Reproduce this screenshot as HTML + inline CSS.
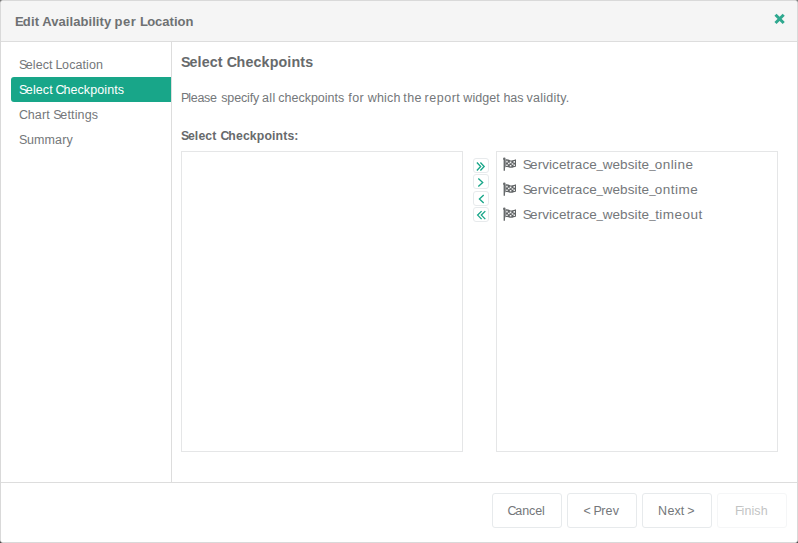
<!DOCTYPE html>
<html lang="en">
<head>
<meta charset="utf-8">
<title>Edit Availability per Location</title>
<style>
  html, body { margin: 0; padding: 0; }
  body {
    width: 798px; height: 543px; overflow: hidden; position: relative;
    background: linear-gradient(#7a7a7a, #4c4c4c);
    font-family: "Liberation Sans", sans-serif;
    font-size: 13px; color: #676a6c;
  }
  .modal {
    position: absolute; left: 0; top: 0; width: 796px; height: 541px;
    border: 1px solid #d9d9d9; border-radius: 3px; background: #fff; overflow: hidden;
  }
  .ln { position: absolute; left: 0; top: 0; width: 796px; height: 16px; line-height: 16px; white-space: nowrap; }
  .ln span { position: absolute; top: 0; }
  .ln i { font-style: normal; }
  .header {
    position: absolute; left: 0; top: 0; width: 796px; height: 40px;
    background: #f5f5f5; border-bottom: 1px solid #ddd;
  }
  .t { font-weight: bold; font-size: 13px; color: #6e7173; }
  .close { position: absolute; left: 771px; top: 10px; width: 14px; height: 14px; }
  .side { position: absolute; left: 0; top: 41px; width: 170px; height: 440px; border-right: 1px solid #ddd; }
  .navbg { position: absolute; left: 10px; top: 76px; width: 160px; height: 25px; background: #18a689; border-radius: 3px 0 0 3px; }
  .n { color: #74777a; }
  .n.w { color: #fff; }
  .h2 { font-weight: bold; font-size: 15px; color: #676a6c; }
  .b { font-weight: bold; color: #676a6c; }
  .box { position: absolute; top: 150px; width: 280px; height: 299px; border: 1px solid #e5e6e7; background: #fff; }
  .mv { position: absolute; left: 472px; width: 14px; height: 13px; border: 1px solid #e7eaec; border-radius: 3px; background: #fff; }
  .mv svg { position: absolute; left: 0; top: 0; }
  .flag { position: absolute; left: 500px; }
  .footer { position: absolute; left: 0; top: 481px; width: 796px; height: 60px; border-top: 1px solid #ddd; background: #fff; }
  .btn {
    position: absolute; top: 492px; width: 68px; height: 33px; border: 1px solid #e7eaec; border-radius: 3px;
    background: #fff;
  }
  .btn.dis { opacity: .4; }
  .g { opacity: .4; }
</style>
</head>
<body>
<div class="modal">
  <div class="header">
    <svg class="close" viewBox="0 0 14 14"><path d="M3.5 3.8 L11.7 12 M11.7 3.8 L3.5 12" stroke="#2fa88f" stroke-width="3" fill="none"/></svg>
  </div>
  <div class="ln t" style="top:13px;font-size:13px"><span style="left:14.08px;letter-spacing:0.15px;"><i style="letter-spacing:-0.93px">E</i>dit</span> <span style="left:41.13px;letter-spacing:0.066px;"><i style="letter-spacing:-0.32px">A</i>vailability</span> <span style="left:113.59px;letter-spacing:0.5px;">per</span> <span style="left:138.98px;letter-spacing:0.012px;"><i style="letter-spacing:-0.77px">L</i>ocation</span></div>

  <div class="side"></div>
  <div class="navbg"></div>
  <div class="ln n" style="top:56px;font-size:12.5px"><span style="left:17.88px;letter-spacing:0.057px;"><i style="letter-spacing:-1.41px">S</i>elect</span> <span style="left:54.52px;letter-spacing:0.091px;"><i style="letter-spacing:-0.37px">L</i>ocation</span></div>
  <div class="ln n w" style="top:81px;font-size:12.5px"><span style="left:17.88px;letter-spacing:0.097px;"><i style="letter-spacing:-1.37px">S</i>elect</span> <span style="left:54.42px;letter-spacing:0.103px;"><i style="letter-spacing:-1.04px">C</i>heckpoints</span></div>
  <div class="ln n" style="top:106px;font-size:12.5px"><span style="left:18.12px;letter-spacing:0.15px;"><i style="letter-spacing:-0.4px">C</i>hart</span> <span style="left:52.28px;letter-spacing:0.146px;"><i style="letter-spacing:-1.32px">S</i>ettings</span></div>
  <div class="ln n" style="top:131px;font-size:12.5px"><span style="left:17.98px;letter-spacing:0.15px;"><i style="letter-spacing:-0.44px">S</i>ummary</span></div>

  <div class="ln h2" style="top:53px;font-size:14.25px"><span style="left:179.94px;letter-spacing:0.15px;"><i style="letter-spacing:-0.92px">S</i>elect</span> <span style="left:225.67px;letter-spacing:0.15px;"><i style="letter-spacing:-0.4px">C</i>heckpoints</span></div>
  <div class="ln n" style="top:89px;font-size:12.5px"><span style="left:180.02px;letter-spacing:-0.278px;"><i style="letter-spacing:-1.14px">P</i>lease</span> <span style="left:220.2px;letter-spacing:-0.122px;">specify</span> <span style="left:261.12px;letter-spacing:0.276px;">all</span> <span style="left:277.22px;letter-spacing:0.007px;">checkpoints</span> <span style="left:347.27px;letter-spacing:0.395px;">for</span> <span style="left:366.67px;letter-spacing:0.206px;">which</span> <span style="left:402.16px;letter-spacing:0.5px;">the</span> <span style="left:423.62px;letter-spacing:0.5px;">report</span> <span style="left:462.37px;letter-spacing:0.047px;">widget</span> <span style="left:502.38px;letter-spacing:-0.069px;">has</span> <span style="left:525.41px;letter-spacing:0.265px;">validity.</span></div>
  <div class="ln b" style="top:127px;font-size:12.25px"><span style="left:180.0px;letter-spacing:0.146px;"><i style="letter-spacing:-1.27px">S</i>elect</span> <span style="left:219.55px;letter-spacing:0.137px;"><i style="letter-spacing:-1.09px">C</i>heckpoints:</span></div>

  <div class="box" style="left:180px"></div>

  <div class="mv" style="top:157px"><svg width="14" height="13" viewBox="0 0 14 13"><path d="M2.9 3.5 L6.65 7.5 L2.9 11.5 M6.4 3.5 L10.15 7.5 L6.4 11.5" stroke="#18a689" stroke-width="1.35" fill="none"/></svg></div>
  <div class="mv" style="top:173.25px"><svg width="14" height="13" viewBox="0 0 14 13"><path d="M4.3 3.5 L8.7 7.5 L4.3 11.5" stroke="#18a689" stroke-width="1.35" fill="none"/></svg></div>
  <div class="mv" style="top:189.5px"><svg width="14" height="13" viewBox="0 0 14 13"><path d="M9.7 3.1 L5.45 7.1 L9.7 11.1" stroke="#18a689" stroke-width="1.35" fill="none"/></svg></div>
  <div class="mv" style="top:205.75px"><svg width="14" height="13" viewBox="0 0 14 13"><path d="M7.6 3.1 L3.65 7.1 L7.6 11.1 M11.3 3.1 L7.35 7.1 L11.3 11.1" stroke="#18a689" stroke-width="1.35" fill="none"/></svg></div>

  <div class="box" style="left:495px"></div>
  <svg class="flag" style="top:155px" width="16" height="16" viewBox="0 0 16 16"><path d="M3.3 2.6 V14.8" stroke="#676a6c" stroke-width="1.4" fill="none"/><circle cx="3.3" cy="2.8" r="1.25" fill="#676a6c"/><path d="M4.3 3.5 C6 2.9 7.5 3.6 9 4.2 C11 4.9 13 3.9 15 3.2 V10.6 C13 11.4 11 12.2 9 11.7 C7.3 11.2 6 10.6 4.3 11.4 Z" fill="#606365"/><path d="M5.2 4.8h1.5v1.6h-1.5z M8.8 5.6h1.6v1.6h-1.6z M12.5 5.1h1.5v1.6h-1.5z M7 6.8h1.6v1.5h-1.6z M10.7 7.3h1.6v1.5h-1.6z M5.2 8.5h1.5v1.5h-1.5z M8.8 9.1h1.6v1.5h-1.6z M12.5 8.6h1.5v1.5h-1.5z" fill="#fff" fill-opacity="0.9"/></svg>
  <div class="ln n" style="top:156px;font-size:13.5px"><span style="left:521.64px;letter-spacing:0.061px;"><i style="letter-spacing:-1.53px">S</i>ervicetrace</span><span style="left:595.45px;font-size:11.5px;">_</span><span style="left:601.67px;letter-spacing:0.1px;">website</span><span style="left:648.35px;font-size:11.5px;">_</span><span style="left:653.78px;letter-spacing:0.447px;">online</span></div>
  <svg class="flag" style="top:180px" width="16" height="16" viewBox="0 0 16 16"><path d="M3.3 2.6 V14.8" stroke="#676a6c" stroke-width="1.4" fill="none"/><circle cx="3.3" cy="2.8" r="1.25" fill="#676a6c"/><path d="M4.3 3.5 C6 2.9 7.5 3.6 9 4.2 C11 4.9 13 3.9 15 3.2 V10.6 C13 11.4 11 12.2 9 11.7 C7.3 11.2 6 10.6 4.3 11.4 Z" fill="#606365"/><path d="M5.2 4.8h1.5v1.6h-1.5z M8.8 5.6h1.6v1.6h-1.6z M12.5 5.1h1.5v1.6h-1.5z M7 6.8h1.6v1.5h-1.6z M10.7 7.3h1.6v1.5h-1.6z M5.2 8.5h1.5v1.5h-1.5z M8.8 9.1h1.6v1.5h-1.6z M12.5 8.6h1.5v1.5h-1.5z" fill="#fff" fill-opacity="0.9"/></svg>
  <div class="ln n" style="top:181px;font-size:13.5px"><span style="left:521.64px;letter-spacing:0.061px;"><i style="letter-spacing:-1.53px">S</i>ervicetrace</span><span style="left:595.45px;font-size:11.5px;">_</span><span style="left:601.67px;letter-spacing:0.1px;">website</span><span style="left:648.35px;font-size:11.5px;">_</span><span style="left:653.78px;letter-spacing:0.5px;">ontime</span></div>
  <svg class="flag" style="top:205px" width="16" height="16" viewBox="0 0 16 16"><path d="M3.3 2.6 V14.8" stroke="#676a6c" stroke-width="1.4" fill="none"/><circle cx="3.3" cy="2.8" r="1.25" fill="#676a6c"/><path d="M4.3 3.5 C6 2.9 7.5 3.6 9 4.2 C11 4.9 13 3.9 15 3.2 V10.6 C13 11.4 11 12.2 9 11.7 C7.3 11.2 6 10.6 4.3 11.4 Z" fill="#606365"/><path d="M5.2 4.8h1.5v1.6h-1.5z M8.8 5.6h1.6v1.6h-1.6z M12.5 5.1h1.5v1.6h-1.5z M7 6.8h1.6v1.5h-1.6z M10.7 7.3h1.6v1.5h-1.6z M5.2 8.5h1.5v1.5h-1.5z M8.8 9.1h1.6v1.5h-1.6z M12.5 8.6h1.5v1.5h-1.5z" fill="#fff" fill-opacity="0.9"/></svg>
  <div class="ln n" style="top:206px;font-size:13.5px"><span style="left:521.64px;letter-spacing:0.061px;"><i style="letter-spacing:-1.53px">S</i>ervicetrace</span><span style="left:595.45px;font-size:11.5px;">_</span><span style="left:601.67px;letter-spacing:0.1px;">website</span><span style="left:648.35px;font-size:11.5px;">_</span><span style="left:654.15px;letter-spacing:0.454px;">timeout</span></div>

  <div class="footer"></div>
  <div class="btn" style="left:491px"></div>
  <div class="btn" style="left:566px"></div>
  <div class="btn" style="left:641px"></div>
  <div class="btn dis" style="left:716px"></div>
  <div class="ln n" style="top:502px;font-size:12.5px"><span style="left:506.52px;letter-spacing:-0.103px;"><i style="letter-spacing:-1.24px">C</i>ancel</span></div>
  <div class="ln n" style="top:502px;font-size:12.5px"><span style="left:582.53px;">&lt;</span> <span style="left:592.52px;letter-spacing:0.15px;"><i style="letter-spacing:-0.64px">P</i>rev</span></div>
  <div class="ln n" style="top:502px;font-size:12.5px"><span style="left:656.92px;letter-spacing:0.084px;"><i style="letter-spacing:0.54px">N</i>ext</span> <span style="left:686.23px;">&gt;</span></div>
  <div class="ln g" style="top:502px;font-size:12.5px"><span style="left:733.92px;letter-spacing:0.116px;"><i style="letter-spacing:-1.07px">F</i>inish</span></div>
</div>
</body>
</html>
